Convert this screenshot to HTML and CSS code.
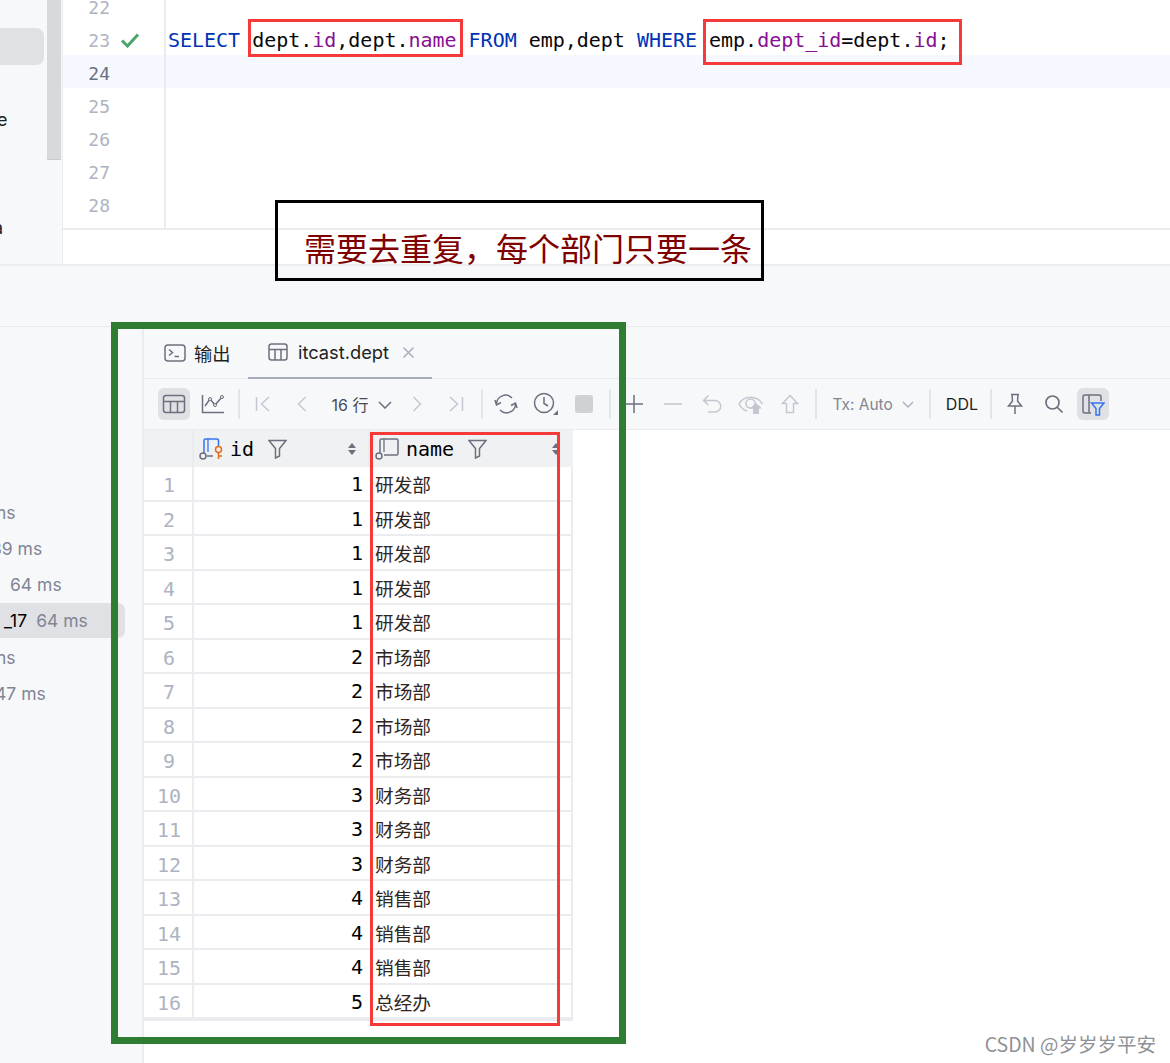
FILE: index.html
```html
<!DOCTYPE html>
<html lang="zh">
<head>
<meta charset="utf-8">
<title>itcast.dept</title>
<link rel="stylesheet" href="styles.css">
</head>
<body>
<div class="page">
  <section class="top">
    <aside class="side">
      <div class="side-sel"></div>
      <div class="side-e">e</div>
      <div class="side-a">a</div>
      <div class="scroll"></div>
    </aside>
    <div class="editor">
      <div class="lines">
        <div class="line"><span class="ln">22</span><span class="mark"></span><span class="code"></span></div>
        <div class="line"><span class="ln">23</span><span class="mark"><svg width="20" height="16" viewBox="0 0 20 16"><path d="M2 8.500 7.500 14 18 2.500" fill="none" stroke="#4aa668" stroke-width="3"/></svg></span><span class="code"><b class="kw">SELECT</b> dept.<b class="fld">id</b>,dept.<b class="fld">name</b> <b class="kw">FROM</b> emp,dept <b class="kw">WHERE</b> emp.<b class="fld">dept_id</b>=dept.<b class="fld">id</b>;</span></div>
        <div class="line cur"><span class="ln">24</span><span class="mark"></span><span class="code"></span></div>
        <div class="line"><span class="ln">25</span><span class="mark"></span><span class="code"></span></div>
        <div class="line"><span class="ln">26</span><span class="mark"></span><span class="code"></span></div>
        <div class="line"><span class="ln">27</span><span class="mark"></span><span class="code"></span></div>
        <div class="line"><span class="ln">28</span><span class="mark"></span><span class="code"></span></div>
        <div class="line"><span class="ln"></span><span class="mark"></span><span class="code"></span></div>
      </div>
    </div>
  </section>
  <div class="band"></div>
  <section class="bottom">
    <aside class="services">
      <div class="svc"><span class="clip1">ms</span></div>
      <div class="svc"><span class="clip2">39 ms</span></div>
      <div class="svc svc-3"><span class="clip3">64 ms</span></div>
      <div class="svc svc-sel"><span class="clip4"><i>_17</i>64 ms</span></div>
      <div class="svc"><span class="clip1">ms</span></div>
      <div class="svc"><span class="clip5">47 ms</span></div>
    </aside>
    <div class="results">
      <div class="tabs">
        <div class="tab">
          <svg width="22" height="18" viewBox="0 0 22 18"><rect x="1" y="1" width="20" height="16" rx="3" fill="none" stroke="#6c707e" stroke-width="1.500"/><path d="M5 5.500 8.500 8.500 5 11.500M10.500 12.500H15" fill="none" stroke="#6c707e" stroke-width="1.500"/></svg>
          <span>输出</span>
        </div>
        <div class="tab tab-on">
          <svg width="20" height="18" viewBox="0 0 20 18"><rect x="1" y="1" width="18" height="16" rx="2.500" fill="none" stroke="#6c707e" stroke-width="1.500"/><path d="M1 6.500H19M7 6.500V17M13 6.500V17" fill="none" stroke="#6c707e" stroke-width="1.500"/></svg>
          <span>itcast.dept</span>
          <svg class="tab-x" width="13" height="13" viewBox="0 0 13 13"><path d="M1.500 1.500 11.500 11.500M11.500 1.500 1.500 11.500" stroke="#a8adbd" stroke-width="1.500"/></svg>
        </div>
      </div>
      <div class="toolbar">
        <div class="btn"><span class="btn-on"><svg width="24" height="20" viewBox="0 0 24 20"><rect x="1.500" y="1.500" width="21" height="17" rx="2.500" fill="none" stroke="#6c707e" stroke-width="1.500"/><path d="M1.500 7.500H22.500M8.500 7.500V18.500M15.500 7.500V18.500" fill="none" stroke="#6c707e" stroke-width="1.500"/></svg></span></div>
        <div class="btn"><svg width="24" height="20" viewBox="0 0 24 20"><path d="M1.500 1V18.500H23" fill="none" stroke="#6c707e" stroke-width="1.500"/><path d="M4 12 9 5 14 11 21 3" fill="none" stroke="#6c707e" stroke-width="1.500"/><circle cx="9" cy="5" r="1.500" fill="#f7f8fa" stroke="#6c707e"/><circle cx="14" cy="11" r="1.500" fill="#f7f8fa" stroke="#6c707e"/><circle cx="21" cy="3" r="1.500" fill="#f7f8fa" stroke="#6c707e"/></svg></div>
        <div class="sep"></div>
        <div class="btn"><svg width="16" height="16" viewBox="0 0 16 16"><path d="M1.500 1V15M14 1 6.500 8 14 15" fill="none" stroke="#c4c7d0" stroke-width="1.500"/></svg></div>
        <div class="btn"><svg width="12" height="16" viewBox="0 0 12 16"><path d="M9.500 1 2.500 8 9.500 15" fill="none" stroke="#c4c7d0" stroke-width="1.500"/></svg></div>
        <span class="rows">16 行</span>
        <svg class="chev chev-rows" width="14" height="8" viewBox="0 0 14 8"><path d="M1 1 7 7 13 1" fill="none" stroke="#6c707e" stroke-width="1.500"/></svg>
        <div class="btn"><svg width="12" height="16" viewBox="0 0 12 16"><path d="M2.500 1 9.500 8 2.500 15" fill="none" stroke="#c4c7d0" stroke-width="1.500"/></svg></div>
        <div class="btn"><svg width="16" height="16" viewBox="0 0 16 16"><path d="M2 1 9.500 8 2 15M14.500 1V15" fill="none" stroke="#c4c7d0" stroke-width="1.500"/></svg></div>
        <div class="sep"></div>
        <div class="btn"><svg width="24" height="22" viewBox="0 0 24 22"><path d="M2.500 11A9 9 0 0 1 18 5M21.500 11A9 9 0 0 1 6 17" fill="none" stroke="#6c707e" stroke-width="1.500"/><path d="M1 7 2.500 12 7 9.500M23 15 21.500 10 17 12.500" fill="none" stroke="#6c707e" stroke-width="1.500"/></svg></div>
        <div class="btn"><svg width="26" height="24" viewBox="0 0 26 24"><circle cx="12" cy="11" r="9.500" fill="none" stroke="#6c707e" stroke-width="1.500"/><path d="M12 5V11.500L16 14" fill="none" stroke="#6c707e" stroke-width="1.500"/><path d="M26 18V23H21Z" fill="#6c707e"/></svg></div>
        <div class="btn"><span class="stop"></span></div>
        <div class="sep"></div>
        <div class="btn"><svg width="20" height="20" viewBox="0 0 20 20"><path d="M10 1V19M1 10H19" stroke="#6c707e" stroke-width="1.500"/></svg></div>
        <div class="btn"><svg width="20" height="4" viewBox="0 0 20 4"><path d="M1 2H19" stroke="#c4c7d0" stroke-width="1.500"/></svg></div>
        <div class="btn"><svg width="20" height="20" viewBox="0 0 20 20"><path d="M6.500 1.500 1.500 6.500 6.500 11M2 6.500H13A5.500 5.500 0 0 1 13 18H6" fill="none" stroke="#c4c7d0" stroke-width="1.500"/></svg></div>
        <div class="btn"><svg width="26" height="20" viewBox="0 0 26 20"><path d="M1 10C6 1 19 1 24.500 10" fill="none" stroke="#c4c7d0" stroke-width="1.500"/><path d="M1 10C3 14 6 16 9 17" fill="none" stroke="#c4c7d0" stroke-width="1.500"/><circle cx="12.500" cy="9.500" r="4.500" fill="none" stroke="#c4c7d0" stroke-width="1.500"/><path d="M18 9 24 14.500H21V20H15V14.500H12Z" fill="#c4c7d0"/></svg></div>
        <div class="btn"><svg width="18" height="20" viewBox="0 0 18 20"><path d="M9 1.500 16.500 9.500H12.500V18.500H5.500V9.500H1.500Z" fill="none" stroke="#c4c7d0" stroke-width="1.500"/></svg></div>
        <div class="sep"></div>
        <span class="tx">Tx: Auto</span>
        <svg class="chev chev-tx" width="12" height="7" viewBox="0 0 12 7"><path d="M1 1 6 6 11 1" fill="none" stroke="#a8adbd" stroke-width="1.300"/></svg>
        <div class="sep sep-tx"></div>
        <span class="ddl">DDL</span>
        <div class="sep sep-ddl"></div>
        <div class="btn"><svg width="18" height="22" viewBox="0 0 18 22"><path d="M5 1.500H13M6 1.500 6.500 8 2.500 13H15.500L11.500 8 12 1.500M9 13V21" fill="none" stroke="#6c707e" stroke-width="1.500"/></svg></div>
        <div class="btn"><svg width="20" height="20" viewBox="0 0 20 20"><circle cx="8.500" cy="8.500" r="6.500" fill="none" stroke="#6c707e" stroke-width="1.700"/><path d="M13 13 18.500 18.500" stroke="#6c707e" stroke-width="1.700"/></svg></div>
        <div class="btn"><span class="btn-on"><svg width="24" height="24" viewBox="0 0 24 24"><path d="M10 21H4A2 2 0 0 1 2 19V5A2 2 0 0 1 4 3H18A2 2 0 0 1 20 5V9M8 3V21" fill="none" stroke="#6c707e" stroke-width="1.500"/><path d="M10.500 11H23L18.500 16.500V23H15V16.500Z" fill="#e0e1e4" stroke="#3574f0" stroke-width="1.500"/></svg></span></div>
      </div>
      <div class="table">
        <div class="hd hd-no"></div>
        <div class="hd">
          <svg width="25" height="22" viewBox="0 0 25 22"><path d="M5 15V2.500A1.500 1.500 0 0 1 6.500 1H18A1.500 1.500 0 0 1 19.500 2.500V8" fill="none" stroke="#3574f0" stroke-width="1.500"/><path d="M9 1V14" stroke="#3574f0" stroke-width="1.300"/><path d="M8 18H14" stroke="#6c707e" stroke-width="1.500"/><circle cx="4" cy="18" r="3" fill="none" stroke="#6c707e" stroke-width="1.500"/><circle cx="19.500" cy="11.500" r="3" fill="none" stroke="#e66d17" stroke-width="1.500"/><path d="M19.500 14.500V21M19.500 18H23" stroke="#e66d17" stroke-width="1.500"/></svg>
          <span class="col">id</span>
          <svg class="fun" width="19" height="20" viewBox="0 0 19 20"><path d="M1 1.500H18L11.500 9.500V17L7.500 19V9.500Z" fill="none" stroke="#6c707e" stroke-width="1.500"/></svg>
          <svg class="sort" width="8" height="14" viewBox="0 0 8 14"><path d="M4 1 8 6H0ZM4 13 0 8H8Z" fill="#6c707e"/></svg>
        </div>
        <div class="hd hd-name">
          <svg width="25" height="22" viewBox="0 0 25 22"><path d="M5 15V2.500A1.500 1.500 0 0 1 6.500 1H21.500A1.500 1.500 0 0 1 23 2.500V15.500A1.500 1.500 0 0 1 21.500 17H9" fill="none" stroke="#6c707e" stroke-width="1.500"/><path d="M9 1V14" stroke="#6c707e" stroke-width="1.300"/><circle cx="4" cy="18" r="3" fill="none" stroke="#6c707e" stroke-width="1.500"/></svg>
          <span class="col">name</span>
          <svg class="fun" width="19" height="20" viewBox="0 0 19 20"><path d="M1 1.500H18L11.500 9.500V17L7.500 19V9.500Z" fill="none" stroke="#6c707e" stroke-width="1.500"/></svg>
          <svg class="sort" width="8" height="14" viewBox="0 0 8 14"><path d="M4 1 8 6H0ZM4 13 0 8H8Z" fill="#6c707e"/></svg>
        </div>
        <div class="no">1</div><div class="num">1</div><div class="txt">研发部</div>
        <div class="no">2</div><div class="num">1</div><div class="txt">研发部</div>
        <div class="no">3</div><div class="num">1</div><div class="txt">研发部</div>
        <div class="no">4</div><div class="num">1</div><div class="txt">研发部</div>
        <div class="no">5</div><div class="num">1</div><div class="txt">研发部</div>
        <div class="no">6</div><div class="num">2</div><div class="txt">市场部</div>
        <div class="no">7</div><div class="num">2</div><div class="txt">市场部</div>
        <div class="no">8</div><div class="num">2</div><div class="txt">市场部</div>
        <div class="no">9</div><div class="num">2</div><div class="txt">市场部</div>
        <div class="no">10</div><div class="num">3</div><div class="txt">财务部</div>
        <div class="no">11</div><div class="num">3</div><div class="txt">财务部</div>
        <div class="no">12</div><div class="num">3</div><div class="txt">财务部</div>
        <div class="no">13</div><div class="num">4</div><div class="txt">销售部</div>
        <div class="no">14</div><div class="num">4</div><div class="txt">销售部</div>
        <div class="no">15</div><div class="num">4</div><div class="txt">销售部</div>
        <div class="no">16</div><div class="num">5</div><div class="txt">总经办</div>
      </div>
    </div>
  </section>
  <div class="mark-box red box-a"></div>
  <div class="mark-box red box-b"></div>
  <div class="mark-box red box-c"></div>
  <div class="mark-box green"></div>
  <div class="note">需要去重复，每个部门只要一条</div>
  <div class="wm">CSDN @岁岁岁平安</div>
</div>
</body>
</html>
```
FILE: styles.css
```css
* { box-sizing: border-box; }
html, body { margin: 0; padding: 0; background: #fff; }
.page {
  position: relative;
  width: 1170px;
  height: 1063px;
  overflow: hidden;
  font-family: Inter, "Noto Sans CJK SC", sans-serif;
  color: #000;
}
svg { display: block; flex: none; }

/* top: editor */
.top { display: flex; height: 266px; border-bottom: 2px solid #ebecf0; }
.side { position: relative; width: 63px; background: #f7f8fa; border-right: 1px solid #ebecf0; flex: none; }
.side-sel { position: absolute; left: -8px; top: 28px; width: 52px; height: 37px; border-radius: 8px; background: #e0e1e4; }
.side-e, .side-a { position: absolute; font-size: 18px; line-height: 24px; color: #1e1f22; }
.side-e { left: -3px; top: 108px; }
.side-a { left: -7px; top: 216px; }
.scroll { position: absolute; left: 47px; top: 0; width: 14px; height: 160px; background: #d8d9dc; border-bottom: 1px solid #c8c9cc; }
.editor { flex: 1; height: 230px; overflow: hidden; border-bottom: 2px solid #ebecf0; }
.lines { margin-top: -11px; }
.line { display: flex; height: 33px; align-items: center; }
.cur { background: #f5f8fe; }
.ln {
  width: 47px;
  padding-top: 4px;
  text-align: right;
  font-family: "DejaVu Sans Mono", monospace;
  font-size: 18px;
  color: #aeb3c2;
  flex: none;
}
.cur .ln { color: #6c707e; }
.mark { width: 56px; flex: none; border-right: 2px solid #ebecf0; height: 33px; display: flex; align-items: center; padding: 2px 0 0 10px; }
.code {
  padding: 2px 0 0 2px;
  font-family: "DejaVu Sans Mono", monospace;
  font-size: 20px;
  white-space: pre;
  color: #080808;
  letter-spacing: -0.02px;
}
.kw { font-weight: 400; color: #0033b3; }
.fld { font-weight: 400; color: #871094; }

.band { height: 61px; background: #f7f8fa; border-bottom: 1px solid #ebecf0; }

/* bottom */
.bottom { display: flex; height: 736px; }
.services { width: 144px; flex: none; background: #f7f8fa; border-right: 2px solid #ebecf0; padding-top: 167px; }
.svc { height: 36px; width: 125px; display: flex; align-items: center; font-size: 17.500px; color: #818594; white-space: nowrap; overflow: hidden; border-radius: 0 7px 7px 0; }
.svc-3 { height: 37px; }
.svc-sel { background: #e0e1e4; height: 35px; margin-bottom: 1px; }
.svc i { font-style: normal; color: #000; margin-right: 9px; }
.clip1 { margin-left: -9px; }
.clip2 { margin-left: -9px; }
.clip3 { margin-left: 10px; }
.clip4 { margin-left: 4px; }
.clip5 { margin-left: -5px; }
.results { flex: 1; min-width: 0; }
.tabs { height: 52px; background: #f7f8fa; border-bottom: 1px solid #ebecf0; display: flex; padding-left: 20px; }
.tab { display: flex; align-items: center; gap: 8px; font-size: 18.300px; color: #1e1f22; height: 52px; }
.tab:first-child { width: 84px; }
.tab-on { width: 184px; padding-left: 20px; border-bottom: 2px solid #a8adbd; gap: 10px; }
.tab-x { margin-left: 3px; }
.toolbar { height: 51px; background: #f7f8fa; border-bottom: 1px solid #ebecf0; display: flex; align-items: center; padding-left: 10.500px; }
.btn { width: 39px; height: 32px; display: flex; align-items: center; justify-content: center; flex: none; }
.btn-on { width: 32px; height: 32px; border-radius: 6px; background: #e0e1e4; display: flex; align-items: center; justify-content: center; }
.sep { width: 2px; height: 30px; background: #e4e5e8; margin: 0 4px 0 5px; flex: none; }
.rows { margin-left: 10px; font-size: 16px; color: #494b57; white-space: nowrap; }
.chev-rows { margin: 1px 5.500px 0 10px; }
.stop { width: 18px; height: 18px; border-radius: 3px; background: #d0d1d5; }
.tx { margin-left: 11.500px; font-size: 15.500px; color: #818594; white-space: nowrap; }
.chev-tx { margin-left: 9px; }
.sep-tx { margin-left: 15px; }
.ddl { margin-left: 11px; font-size: 16px; color: #1e1f22; }
.sep-ddl { margin-left: 12px; }

/* table */
.table {
  width: 429px;
  display: grid;
  grid-template-columns: 50px 176px 203px;
  grid-template-rows: 37px;
  grid-auto-rows: 34.500px;
  border-bottom: 2px solid #ebecf0;
  border-right: 2px solid #ebecf0;
}
.hd {
  height: 37px;
  background: #f0f1f2;
  display: flex;
  align-items: center;
  padding-left: 5px;
  border-right: 2px solid #ebecf0;
}
.hd-name { border-right: 0; }
.col { font-family: "DejaVu Sans Mono", monospace; font-size: 20px; margin-left: 6px; color: #000; }
.fun { margin-left: 14px; }
.sort { margin-left: auto; margin-right: 12px; }
.hd-name .sort { margin-right: 13px; }
.no, .num, .txt { border-bottom: 2px solid #ebecf0; display: flex; align-items: center; height: 34.500px; padding-top: 2px; }
.no { justify-content: center; border-right: 2px solid #ebecf0; font-family: "DejaVu Sans Mono", monospace; font-size: 20px; color: #aeb3c2; padding-top: 4px; padding-left: 2px; }
.num { justify-content: flex-end; padding-right: 7px; font-family: "DejaVu Sans Mono", monospace; font-size: 20px; color: #000; }
.txt { font-size: 18.700px; padding: 1px 0 0 5px; color: #30261e; }

/* annotations laid over the screenshot */
.mark-box { position: absolute; pointer-events: none; }
.red { border: 3px solid #f63a3a; }
.box-a { left: 248px; top: 19px; width: 215px; height: 38px; }
.box-b { left: 703px; top: 19px; width: 259px; height: 46px; }
.box-c { left: 370px; top: 432px; width: 190px; height: 594px; }
.green { left: 111px; top: 322px; width: 515px; height: 722px; border: 7px solid #2e7d32; }
.note {
  position: absolute;
  left: 275px;
  top: 200px;
  width: 489px;
  height: 81px;
  padding: 23px 0 0 26px;
  border: 3px solid #000;
  font-family: "Noto Sans CJK SC", sans-serif;
  font-size: 32px;
  line-height: 42px;
  color: #7f0000;
  white-space: nowrap;
  overflow: hidden;
}
.wm {
  position: absolute;
  right: 14px;
  top: 1031px;
  font-family: "Noto Sans CJK SC", sans-serif;
  font-size: 19.500px;
  line-height: 26px;
  color: #8f9296;
  white-space: nowrap;
}
```
